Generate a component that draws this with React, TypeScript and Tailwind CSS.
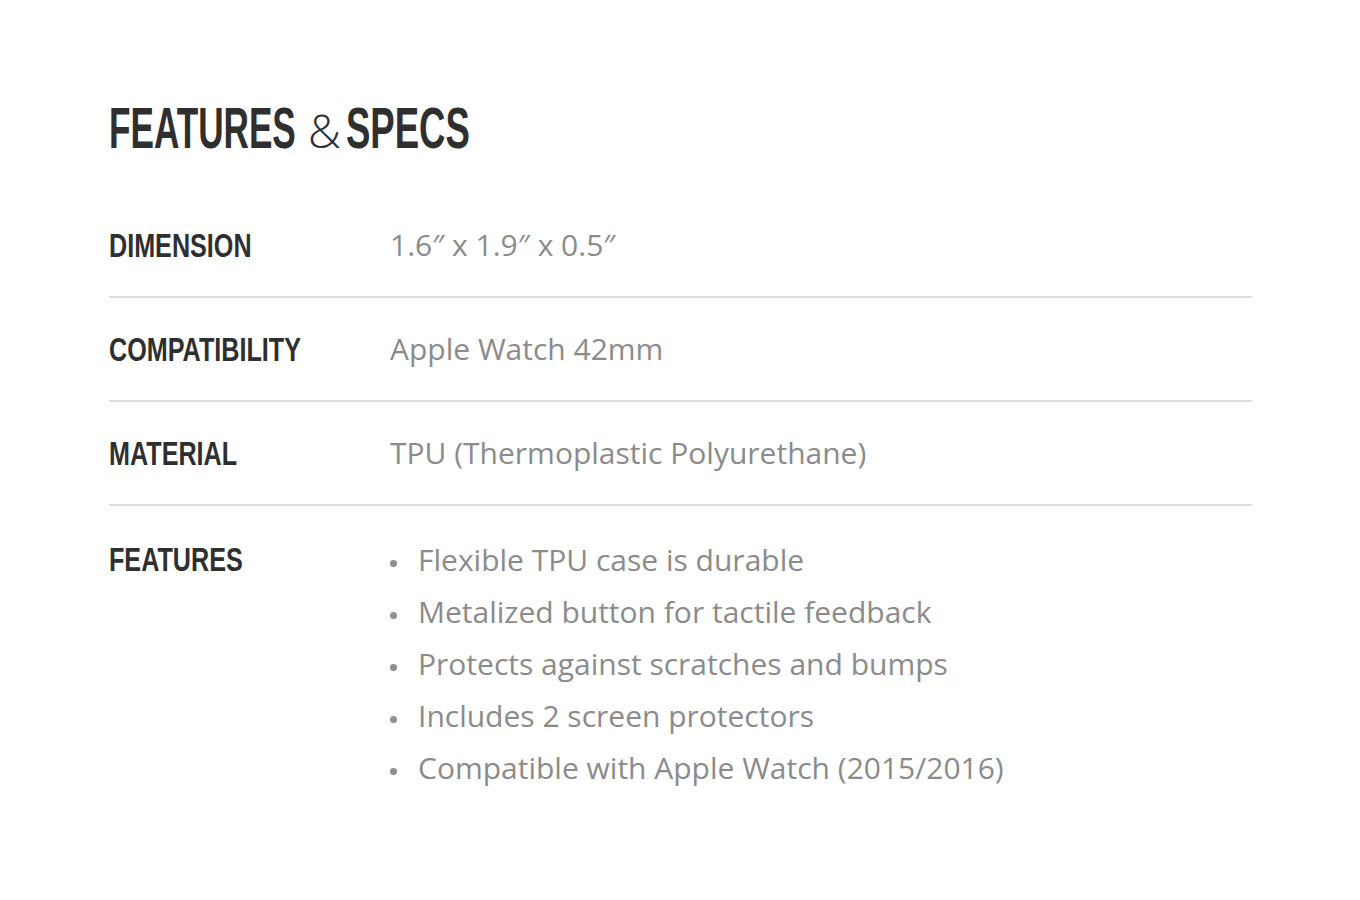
const specs = [
  { label: 'DIMENSION', value: '1.6\u2033 x 1.9\u2033 x 0.5\u2033' },
  { label: 'COMPATIBILITY', value: 'Apple Watch 42mm' },
  { label: 'MATERIAL', value: 'TPU (Thermoplastic Polyurethane)' },
];

const features = [
  'Flexible TPU case is durable',
  'Metalized button for tactile feedback',
  'Protects against scratches and bumps',
  'Includes 2 screen protectors',
  'Compatible with Apple Watch (2015/2016)',
];

// condensed display face is faked with a horizontal squeeze
const condensed =
  "inline-block origin-left whitespace-nowrap font-['Liberation_Sans_Narrow','Liberation_Sans',Arial,sans-serif] font-bold";

const labelCls = `${condensed} scale-x-[0.74] text-[34px] leading-[38px] text-[#2f2f2f]`;

export default function App() {
  return (
    <div className="min-h-[900px] bg-white pl-[109px] pr-[108px] pt-[97px] font-['Open_Sans',sans-serif]">
      <h2 className="mb-[39px] flex h-[58px] items-baseline text-[58px] leading-none text-[#2f2f2f]">
        <span className="w-[189px] shrink-0">
          <span className={`${condensed} scale-x-[0.606]`}>FEATURES</span>
        </span>
        <span className="ml-[10px] w-[31px] shrink-0 font-['Open_Sans',sans-serif] text-[46px] font-light">&amp;</span>
        <span className="ml-[7px] w-[124px] shrink-0">
          <span className={`${condensed} scale-x-[0.63]`}>SPECS</span>
        </span>
      </h2>

      <div className="flex flex-col">
        {specs.map((s) => (
          <div
            key={s.label}
            className="grid h-[104px] grid-cols-[281px_1fr] items-center border-b-2 border-[#dedede]"
          >
            <span className={labelCls}>{s.label}</span>
            <span className="text-[30px] leading-[38px] text-[#8b8b8b]">{s.value}</span>
          </div>
        ))}
        <div className="grid grid-cols-[281px_1fr] items-start pt-[28px]">
          <span className={`${labelCls} mt-[6px]`}>FEATURES</span>
          <ul className="flex flex-col">
            {features.map((f) => (
              <li key={f} className="flex items-center text-[30px] leading-[52px] text-[#8b8b8b]">
                <span className="mr-[21px] mt-[7px] h-[7px] w-[7px] shrink-0 rounded-full bg-[#909090]" />
                {f}
              </li>
            ))}
          </ul>
        </div>
      </div>
    </div>
  );
}
